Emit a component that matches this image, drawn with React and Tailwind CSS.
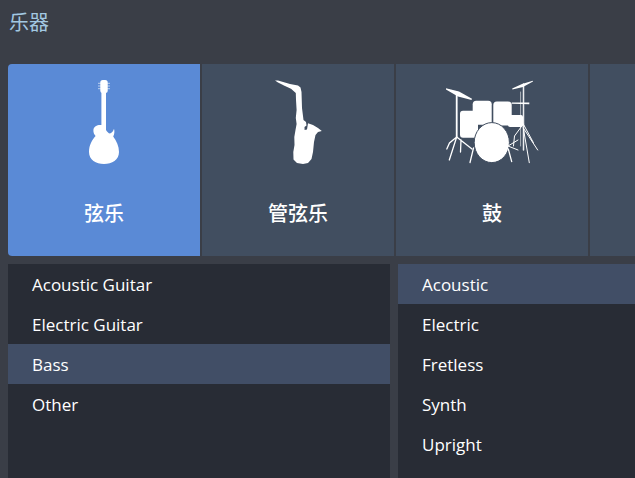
// 乐器选择面板
const font = { fontFamily: '"Open Sans", "Noto Sans CJK SC", sans-serif' };

function GuitarIcon() {
    return (
        <svg viewBox="8 72 192 96" className="w-[192px] h-[96px]" fill="#fff">
            <rect x="100.3" y="80" width="7.4" height="13" rx="2.5" />
            <path d="M98 83.3h12M98 86h12M98 88.7h12" stroke="#fff" strokeWidth="1" opacity="0.6" />
            <path d="M101.4 90 L106 90 L106 130 C107 131.5 108.5 133.5 110 133.5 C112 133 113.4 131 114 128.8 C114.8 131.5 114.4 134.5 113.2 136.5 C116.5 141 119 146 119 152 C119 160 112 164 104 164 C96 164 89 160 89 152 C89 145 92 140 95.6 136 C94.2 134.5 93.2 132.5 93.4 130 C93.8 126 97.5 124.6 101.4 125 Z" />
        </svg>
    );
}

function SaxIcon() {
    return (
        <svg viewBox="202 72 192 96" className="w-[192px] h-[96px]" fill="#fff">
            <path d="M275 80.6 L278 80.4 L290 84 L298 85.5 L300.5 87.5 L301.5 92 L302 108 L303 116 L303.5 120 L306 122 L306.5 125.5 L304.5 127 L304.6 130 L307 129.5 L308 123.3 L313 125 L318 128 L321.8 131 L318 132 L315.5 135 L314 142 L313 152 L311.5 159 L308 163 L303 164 L297 163 L293.5 159.5 L293.3 152 L294.5 145 L294.3 137 L295.5 130 L296.6 124 L295.8 118 L296.6 110 L296 100 L295.8 93 L291 88.8 L285 86 L278 82.6 Z" />
        </svg>
    );
}

function DrumIcon() {
    return (
        <svg viewBox="396 72 192 96" className="w-[192px] h-[96px]" fill="#fff" stroke="none">
            {/* 镲片 */}
            <path d="M446 88.2 L459 91.5 L472 98.8 L471.5 100 L458 96.5 L446 89.4 Z" />
            <path d="M512.2 88.6 L522 84 L532.8 80.8 L533 81.6 L523 87 L512.4 89.6 Z" />
            <path d="M511.7 102.4 L529.3 102.4 L529.3 104.2 L511.7 103.8 Z" />
            {/* 鼓身 */}
            <rect x="460" y="110.8" width="18" height="27" rx="3" />
            <rect x="472.7" y="100.8" width="19" height="24" rx="3.5" />
            <rect x="493.3" y="101.6" width="18.4" height="24" rx="3.5" />
            <rect x="508" y="115" width="15" height="12" rx="2" />
            <ellipse cx="491.8" cy="142.6" rx="17.6" ry="20" stroke="#414e60" strokeWidth="1" />
            {/* 支架 */}
            <g stroke="#fff" fill="none" strokeLinecap="round">
                <path d="M456.7 94 V137" strokeWidth="1.8" />
                <path d="M456.7 137 L449.5 143 L446.8 149 M456.7 137 L449.3 160 M456.7 137 L472 149 M461 140 L460.5 152" strokeWidth="1.3" />
                <path d="M473.5 148 L470 162.5 M508.3 149 L511.7 161.7" strokeWidth="1.3" />
                <path d="M523.5 84 V150" strokeWidth="1.5" opacity="0.9" />
                <path d="M520.6 92 V146" strokeWidth="0.8" opacity="0.7" />
                <path d="M523.3 124 L514.5 136 L513.5 146 M523.3 124 L533.3 142.5 M523.3 128 L537.7 150 M523.3 128 L529.3 162.7 M518 140 L508 146 L518 150" strokeWidth="1" />
            </g>
        </svg>
    );
}

function Tile({ icon, label, active }) {
    return (
        <div
            className={`w-[192px] h-[192px] shrink-0 flex flex-col items-center pt-2 ${
                active ? "bg-[#5a8ad6]" : "bg-[#414e60]"
            }`}
        >
            {icon}
            <span className="mt-[34px] text-[20px] leading-[24px] font-medium text-white">
                {label}
            </span>
        </div>
    );
}

function List({ items, selected }) {
    return (
        <ul className="w-[382px] shrink-0 h-[214px] bg-[#282c35]">
            {items.map((it) => (
                <li
                    key={it}
                    className={`h-10 pl-6 pt-[2px] flex items-center text-[17px] text-white ${
                        it === selected ? "bg-[#414e66]" : ""
                    }`}
                >
                    {it}
                </li>
            ))}
        </ul>
    );
}

export default function App() {
    return (
        <div className="w-[635px] h-[478px] overflow-hidden bg-[#3a3e47]" style={font}>
            <div className="h-16 pl-[9px] pt-[10px]">
                <h1 className="text-[20px] leading-[26px] font-normal text-[#a2c8e2]">乐器</h1>
            </div>
            <div className="ml-2 flex gap-[2px] rounded-l overflow-hidden">
                <Tile icon={<GuitarIcon />} label="弦乐" active />
                <Tile icon={<SaxIcon />} label="管弦乐" />
                <Tile icon={<DrumIcon />} label="鼓" />
                <Tile label="" />
            </div>
            <div className="ml-2 mt-2 flex gap-2">
                <List items={["Acoustic Guitar", "Electric Guitar", "Bass", "Other"]} selected="Bass" />
                <List items={["Acoustic", "Electric", "Fretless", "Synth", "Upright"]} selected="Acoustic" />
            </div>
        </div>
    );
}
